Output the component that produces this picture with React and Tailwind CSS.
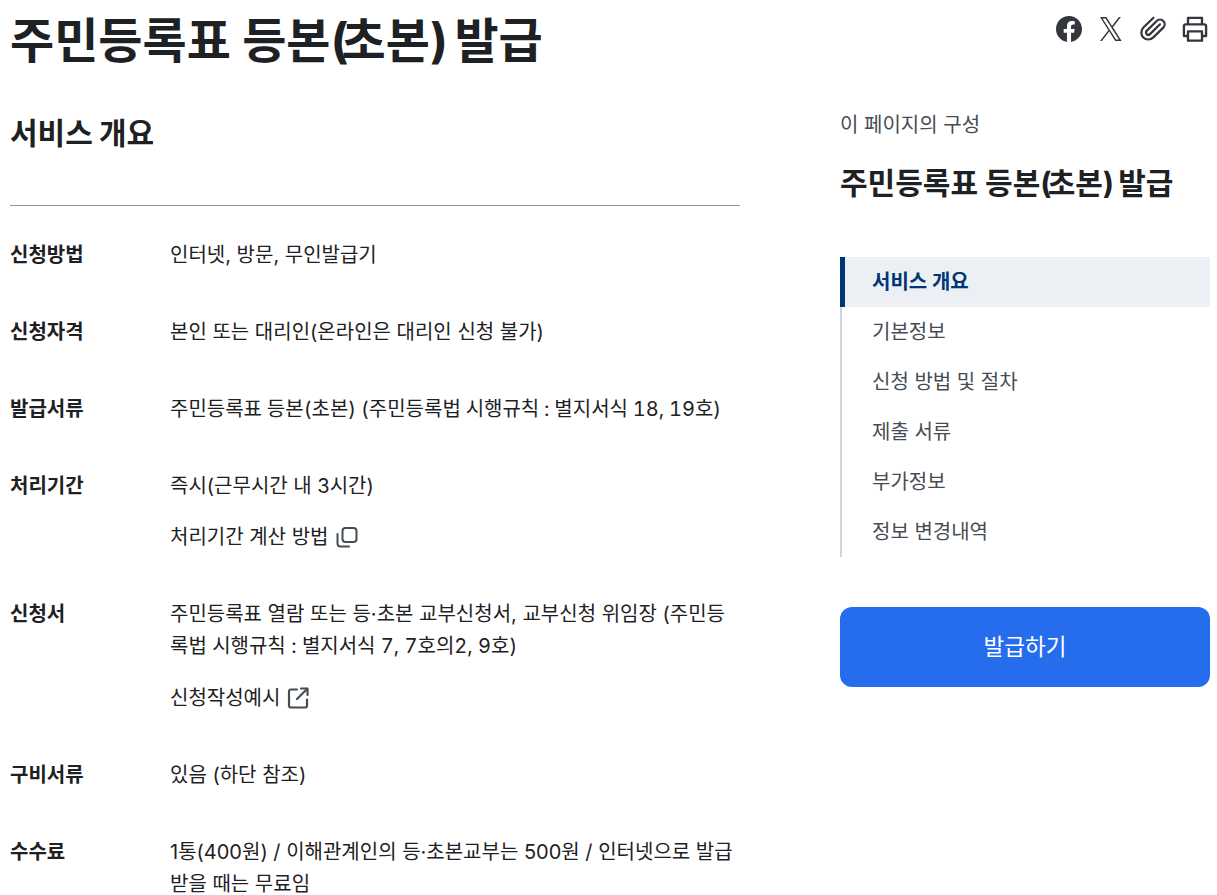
import React from 'react';
import { Paperclip } from 'lucide-react';

const rows = [
  { label: '신청방법', lines: ['인터넷, 방문, 무인발급기'] },
  { label: '신청자격', lines: ['본인 또는 대리인(온라인은 대리인 신청 불가)'] },
  {
    label: '발급서류',
    lines: [<span className="tabular-nums [word-spacing:-0.5px]">주민등록표 등본(초본) (주민등록법 시행규칙 : 별지서식 18, 19호)</span>],
  },
  { label: '처리기간', lines: ['즉시(근무시간 내 3시간)'], link: '처리기간 계산 방법', icon: 'copy' },
  {
    label: '신청서',
    lines: [
      '주민등록표 열람 또는 등·초본 교부신청서, 교부신청 위임장 (주민등',
      <span className="tabular-nums">록법 시행규칙 : 별지서식 7, 7호의2, 9호)</span>,
    ],
    link: '신청작성예시',
    icon: 'external',
  },
  { label: '구비서류', lines: ['있음 (하단 참조)'] },
  { label: '수수료', lines: ['1통(400원) / 이해관계인의 등·초본교부는 500원 / 인터넷으로 발급', '받을 때는 무료임'] },
];

const toc = ['서비스 개요', '기본정보', '신청 방법 및 절차', '제출 서류', '부가정보', '정보 변경내역'];

const CopyIcon = () => (
  <svg width="24" height="24" viewBox="0 0 24 24" fill="none" stroke="#464c53" strokeWidth="2" strokeLinecap="round" strokeLinejoin="round">
    <rect x="7.5" y="3" width="14" height="14" rx="3" />
    <path d="M2.5 9v9.5a3 3 0 0 0 3 3H14" />
  </svg>
);

const ExternalIcon = () => (
  <svg width="24" height="24" viewBox="0 0 24 24" fill="none" stroke="#464c53" strokeWidth="2.2" strokeLinecap="round" strokeLinejoin="round">
    <path d="M11 3.5H5a2 2 0 0 0-2 2v14a2 2 0 0 0 2 2h14a2 2 0 0 0 2-2v-6" />
    <path d="M15 2.5h6.5V9" />
    <path d="M21 3l-10 10" />
  </svg>
);

const App = () => {
  return (
    <div className="h-[895px] overflow-hidden bg-white pl-[10px] pr-[7px] font-['Inter','Noto_Sans_CJK_KR',sans-serif] text-[#1e2124]">
      <div className="flex justify-between">
        <h1 className="mt-[7px] text-[48px] font-bold leading-[68px]">
          주민등록표 등본<span className="tracking-[-7px]">(</span>초본<span className="tracking-[-5px]">)</span> 발급
        </h1>
        <div className="mr-[1px] flex h-[58px] items-center gap-[14px] text-[#33363d]">
          <div className="flex h-[28px] w-[28px] items-center justify-center">
            <svg width="26" height="26" viewBox="0 0 24 24" fill="#33363d">
              <path d="M24 12.07C24 5.4 18.63 0 12 0S0 5.4 0 12.07c0 6.03 4.39 11.02 10.13 11.93v-8.44H7.08v-3.49h3.05V9.41c0-3.02 1.79-4.69 4.53-4.69 1.31 0 2.69.24 2.69.24v2.97h-1.51c-1.49 0-1.96.93-1.96 1.89v2.25h3.33l-.53 3.49h-2.8V24C19.61 23.09 24 18.1 24 12.07z" />
            </svg>
          </div>
          <div className="flex h-[28px] w-[28px] items-center justify-center">
            <svg width="22" height="24" viewBox="0 0 24 24" preserveAspectRatio="none" fill="#33363d">
              <path d="M14.1 10.3 22.8 0h-2.1l-7.6 8.9L7 0H0l9.2 13.3L0 24h2.1l8-9.4L16.6 24h7L14.1 10.3zm-2.9 3.3-.9-1.3L2.8 1.6H6l6 8.5.9 1.3 7.8 11.1h-3.2l-6.3-8.9z" />
            </svg>
          </div>
          <Paperclip size={28} strokeWidth={1.9} className="scale-x-[-1] rotate-[90deg]" />
          <svg width="28" height="28" viewBox="0 0 24 24" fill="none" stroke="#33363d" strokeWidth="2" strokeLinejoin="round">
            <path d="M6 8V2.5h12V8" />
            <path d="M6 18H2.5V9.5A1.5 1.5 0 0 1 4 8h16a1.5 1.5 0 0 1 1.5 1.5V18H18" />
            <rect x="6" y="14" width="12" height="8" />
          </svg>
        </div>
      </div>

      <div className="mt-[33px] flex justify-between">
        <main className="w-[730px]">
          <h2 className="pt-[3px] text-[30px] font-bold leading-[44px] [word-spacing:-1px]">서비스 개요</h2>
          <div className="mt-[50px] border-t border-[#949494]" />
          <dl className="mt-[33px] flex flex-col gap-[45px]">
            {rows.map(row => (
              <div key={row.label} className="flex text-[20px] leading-[32px]">
                <dt className="w-[160px] shrink-0 font-bold">{row.label}</dt>
                <dd>
                  {row.lines.map((line, i) => (
                    <p key={i} className="whitespace-nowrap">{line}</p>
                  ))}
                  {row.icon === 'copy' && (
                    <p className="mt-[19px] flex items-center gap-[7px]">
                      {row.link}
                      <CopyIcon />
                    </p>
                  )}
                  {row.icon === 'external' && (
                    <p className="mt-[20px] flex items-center gap-[6px]">
                      {row.link}
                      <ExternalIcon />
                    </p>
                  )}
                </dd>
              </div>
            ))}
          </dl>
        </main>

        <aside className="w-[370px] pt-[1px]">
          <p className="text-[20px] leading-[32px] text-[#464c53]">이 페이지의 구성</p>
          <h3 className="mt-[20px] text-[30px] font-bold leading-[44px]">
            주민등록표 등본<span className="tracking-[-4px]">(</span>초본<span className="tracking-[-3px]">)</span> 발급
          </h3>
          <nav className="mt-[52px] border-l-2 border-[#cbd5e1]">
            {toc.map((item, i) => (
              <div
                key={item}
                className={
                  i === 0
                    ? '-ml-[2px] h-[50px] border-l-[5px] border-[#003675] bg-[#eceff4] pl-[27px] text-[20px] font-bold leading-[50px] text-[#003675]'
                    : 'h-[50px] pl-[30px] text-[20px] leading-[50px] text-[#464c53]'
                }
              >
                {item}
              </div>
            ))}
          </nav>
          <button className="mt-[50px] h-[80px] w-full rounded-[12px] bg-[#266ded] text-[22.5px] text-white">발급하기</button>
        </aside>
      </div>
    </div>
  );
};

export default App;
